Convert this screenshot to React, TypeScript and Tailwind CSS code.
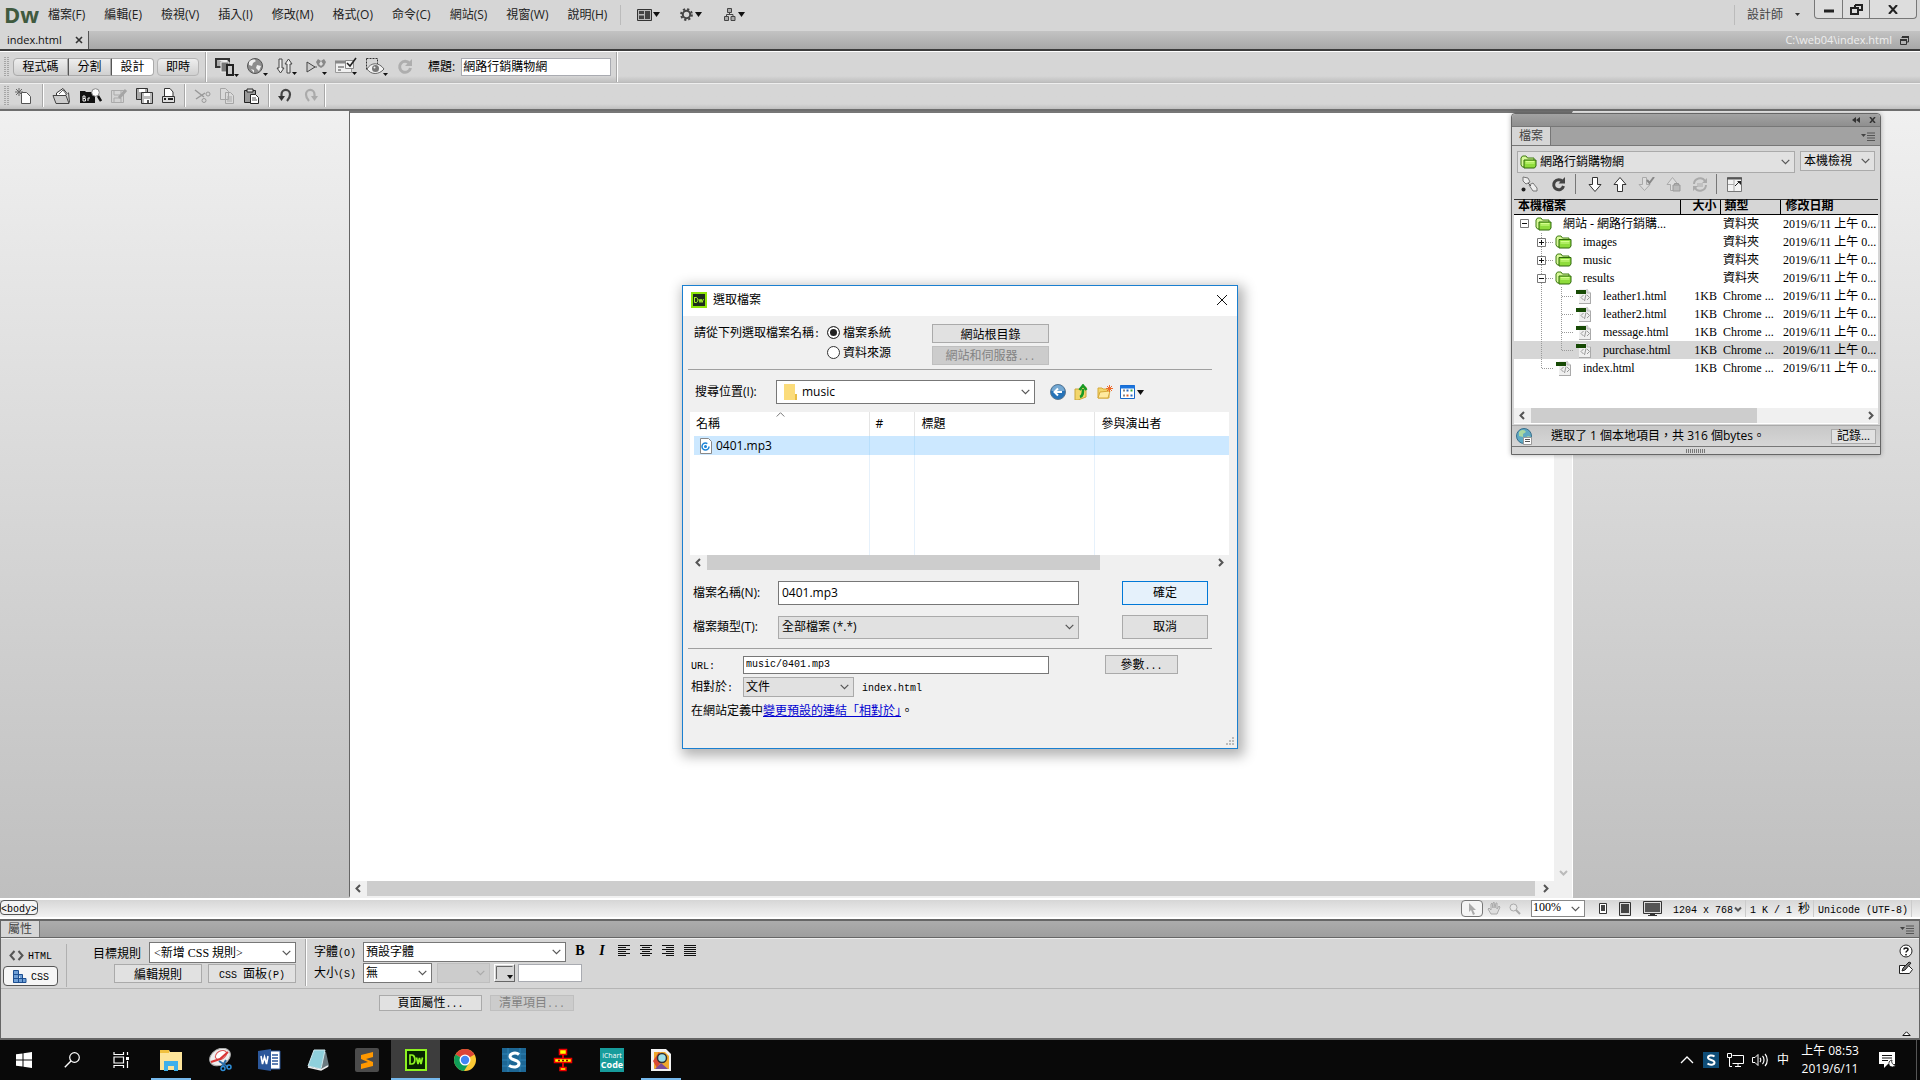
import type { ReactNode } from 'react'
import clsx from 'clsx'

const ui = "font-['Open_Sans','Noto_Sans_CJK_TC',sans-serif]"
const serif = "font-['Liberation_Serif','Noto_Sans_CJK_TC',serif]"

const menus = ['檔案(F)', '編輯(E)', '檢視(V)', '插入(I)', '修改(M)', '格式(O)', '命令(C)', '網站(S)', '視窗(W)', '說明(H)']

type TreeRow = {
  name: string
  depth: 0 | 1 | 2
  kind: 'open' | 'closed' | 'file'
  last?: boolean
  selected?: boolean
}

const tree: TreeRow[] = [
  { name: '網站 - 網路行銷購...', depth: 0, kind: 'open' },
  { name: 'images', depth: 1, kind: 'closed' },
  { name: 'music', depth: 1, kind: 'closed' },
  { name: 'results', depth: 1, kind: 'open' },
  { name: 'leather1.html', depth: 2, kind: 'file' },
  { name: 'leather2.html', depth: 2, kind: 'file' },
  { name: 'message.html', depth: 2, kind: 'file' },
  { name: 'purchase.html', depth: 2, kind: 'file', last: true, selected: true },
  { name: 'index.html', depth: 1, kind: 'file', last: true },
]

/* Half-width runs are set in a smaller mono face so that two of them fill one full-width cell. */
function Cells({ text, className }: { text: string; className?: string }) {
  return (
    <span className={clsx('whitespace-pre', className)}>
      {text.split(/([\x20-\x7e]+)/).map((run, i) =>
        i % 2 ? (
          <span key={i} className="font-['Liberation_Mono',monospace] text-[10px]">
            {run}
          </span>
        ) : (
          run
        ),
      )}
    </span>
  )
}

function Svg({ w = 16, h = 16, children, className }: { w?: number; h?: number; children: ReactNode; className?: string }) {
  return (
    <svg width={w} height={h} viewBox={`0 0 ${w} ${h}`} fill="none" className={clsx('shrink-0', className)} aria-hidden>
      {children}
    </svg>
  )
}

function Chevron({ className }: { className?: string }) {
  return (
    <Svg w={9} h={6} className={className}>
      <path d="M.7.8 4.500 4.600 8.300.8" stroke="currentColor" strokeWidth="1.200" />
    </Svg>
  )
}

function ScrollArrow({ dir, className }: { dir: 'left' | 'right' | 'down'; className?: string }) {
  const d = { left: 'M6 1 2.500 4.500 6 8', right: 'M3 1 6.500 4.500 3 8', down: 'M1 3 4.500 6.500 8 3' }[dir]
  return (
    <Svg w={9} h={9} className={className}>
      <path d={d} stroke="currentColor" strokeWidth="2" />
    </Svg>
  )
}

type SelectProps = {
  label: string
  options: string[]
  className?: string
  textClass?: string
  disabled?: boolean
  icon?: ReactNode
}

function Select({ label, options, className, textClass, disabled, icon }: SelectProps) {
  return (
    <div className={clsx('relative flex items-center border', className)}>
      {icon}
      <select
        aria-label={label}
        disabled={disabled}
        className={clsx('h-full min-w-0 flex-1 appearance-none bg-transparent pr-4 outline-none', textClass)}
      >
        {options.map((o) => (
          <option key={o}>{o}</option>
        ))}
      </select>
      <Chevron className={clsx('pointer-events-none absolute right-1', disabled ? 'text-[#aaa]' : 'text-[#555]')} />
    </div>
  )
}

function ToolButton({ label, children, className }: { label: string; children: ReactNode; className?: string }) {
  return (
    <button type="button" aria-label={label} className={clsx('flex shrink-0 items-center justify-center', className)}>
      {children}
    </button>
  )
}

function Grip() {
  return (
    <Svg w={5} h={22}>
      <path d="M1 1v20M4 1v20" stroke="#777" strokeWidth="1" strokeDasharray="1 1" />
    </Svg>
  )
}

function Divider({ className }: { className?: string }) {
  return <div className={clsx('w-[2px] self-stretch border-l border-r border-l-[#a8a8a8] border-r-white', className)} />
}

function Caret() {
  return (
    <Svg w={7} h={5}>
      <path d="M0 0h7L3.500 5z" fill="#111" />
    </Svg>
  )
}

function PanelMenu() {
  return (
    <Svg w={15} h={9}>
      <path d="M0 2h5L2.500 5z" fill="#444" />
      <path d="M6 1h8M6 3.500h8M6 6h8M6 8.500h8" stroke="#555" />
    </Svg>
  )
}

function Folder({ open = true }: { open?: boolean }) {
  return (
    <Svg w={17} h={14}>
      <path d="M1 3 2.500 1H6l1.500 2H14v9H2.500L1 10z" fill="#d8f99a" stroke="#3c7a0e" />
      <path d={open ? 'M4 5h12v6l-1.500 2H4z' : 'M4 4.500h12V11l-1.500 2H4z'} fill="#8fdc3c" stroke="#2f690a" />
      <path d="M5.500 6.500h9M5.500 8h9" stroke="#d3ff8b" />
    </Svg>
  )
}

function HtmlFile() {
  return (
    <Svg w={17} h={16}>
      <path d="M4 1h8l4 4v10H4z" fill="#efefef" />
      <path d="M12 1v4h4" fill="#ddd" stroke="#bbb" />
      <path d="M4 15.500h12M15.500 5v10" stroke="#aaa" />
      <path d="M8.500 7 6 9.500 8.500 12M12 7l2.500 2.500L12 12M11 6.500 9.500 13" stroke="#999" />
      <path d="M1 2h10v4H1z" fill="#174a05" />
    </Svg>
  )
}

function MenuBar() {
  return (
    <header className={clsx('flex h-[31px] items-center bg-[#d6d6d6] pb-[2px] pl-1 text-xs text-[#222]', ui)}>
      <span className="w-[44px] pb-[2px] text-[22px] leading-none font-bold text-[#3f5a3f]">Dw</span>
      <nav className="flex gap-[19px]" aria-label="主選單">
        {menus.map((m) => (
          <button key={m} type="button" className="whitespace-nowrap">
            {m}
          </button>
        ))}
      </nav>
      <div className="ml-[13px] h-5 border-l border-[#bbb]" />
      <div className="ml-4 flex items-center gap-5">
        <ToolButton label="版面" className="gap-px">
          <Svg w={15} h={12}>
            <path d="M.5.5h14v11H.5z" fill="#bbb" stroke="#333" />
            <path d="M2 2h5v3H2zM2 6.500h5V10H2zM8 2h5v8H8z" fill="#444" />
          </Svg>
          <Caret />
        </ToolButton>
        <ToolButton label="擴充" className="gap-[2px]">
          <Svg w={13} h={13}>
            <circle cx="6.500" cy="6.500" r="5.400" stroke="#444" strokeWidth="2" strokeDasharray="2.200 2.040" />
            <circle cx="6.500" cy="6.500" r="3.700" stroke="#444" strokeWidth="2" />
          </Svg>
          <Caret />
        </ToolButton>
        <ToolButton label="網站" className="ml-[2px] gap-[2px]">
          <Svg w={12} h={13}>
            <path d="M3.500.5h4v4h-4zM.5 8.500h4v4h-4zM7 8.500h4v4H7z" fill="#aaa" stroke="#444" />
            <path d="M5.500 5v1.500M2.500 8V6.500H9V8" stroke="#444" />
          </Svg>
          <Caret />
        </ToolButton>
      </div>
      <div className="ml-auto h-5 border-l border-[#bbb]" />
      <button type="button" className="ml-3 flex items-center gap-3 text-[#444]">
        設計師
        <Svg w={5} h={3}>
          <path d="M0 0h5L2.500 3z" fill="#333" />
        </Svg>
      </button>
      <div className="mr-[3px] ml-[14px] flex h-[19px] self-start rounded-b border border-t-0 border-[#777] bg-[#ddd]">
        <ToolButton label="最小化" className="w-7 border-r border-[#777]">
          <Svg w={10} h={10}>
            <path d="M0 7h10" stroke="#222" strokeWidth="3" />
          </Svg>
        </ToolButton>
        <ToolButton label="還原" className="w-[27px] border-r border-[#777]">
          <Svg w={13} h={11}>
            <path d="M5 1h7v5H8M5 1v2M1 4h7v6H1z" stroke="#222" strokeWidth="2" />
          </Svg>
        </ToolButton>
        <ToolButton label="關閉" className="w-[46px]">
          <Svg w={10} h={9}>
            <path d="m1 0 8 9M9 0 1 9" stroke="#222" strokeWidth="2" />
          </Svg>
        </ToolButton>
      </div>
    </header>
  )
}

function DocumentTabs() {
  return (
    <div className={clsx('flex h-[20px] border-b-2 border-[#3c3c3c] bg-linear-to-b from-[#c3c3c3] to-[#a8a8a8] text-[11px]', ui)}>
      <div className="flex items-center gap-[13px] border-r border-[#555] bg-[#d6d6d6] pr-[5px] pl-[7px] text-[#111]">
        <span>index.html</span>
        <ToolButton label="關閉 index.html">
          <Svg w={8} h={8}>
            <path d="m1 1 6 6M7 1 1 7" stroke="#333" strokeWidth="1.600" />
          </Svg>
        </ToolButton>
      </div>
      <div className="ml-auto flex items-center gap-2 pr-[11px] text-[#eee]">
        <span>C:\web04\index.html</span>
        <Svg w={9} h={9}>
          <path d="M2 2V1h6.500v5H7M.5 3.500h6v5h-6z" stroke="#333" />
          <path d="M2 1h7M0 4h7" stroke="#333" strokeWidth="2" />
        </Svg>
      </div>
    </div>
  )
}

const viewIcons = [
  {
    label: '多螢幕',
    art: (
      <>
        <path d="M1 2h13v8H1z" fill="#aaa" stroke="#333" strokeWidth="2" />
        <path d="M3 3h9v3z" fill="#eee" />
        <path d="M6 5h8v10H6z" fill="#777" stroke="#eee" />
        <path d="M12 8h6v10h-6z" fill="#ccc" stroke="#222" strokeWidth="2" />
        <path d="M19 17h5l-2.500 3z" fill="#111" />
      </>
    ),
  },
  {
    label: '預覽',
    art: (
      <>
        <circle cx="10" cy="9" r="7.500" fill="#8d8d8d" stroke="#555" />
        <path d="M4 5c3-3 6-3 7-1L8 6 7 9 4 8zM12 8l4 1-2 5-3-3zM6 12l3 1v3z" fill="#eee" />
        <path d="M18 16h5l-2.500 3z" fill="#111" />
      </>
    ),
  },
  {
    label: '檔案管理',
    art: (
      <>
        <path d="M4 2h3v9h2l-3.500 5L2 11h2zM12 16h3V7h2l-3.500-5L10 7h2z" fill="#eee" stroke="#444" />
        <path d="M17 15h5l-2.500 3z" fill="#111" />
      </>
    ),
  },
  {
    label: 'W3C 驗證',
    art: (
      <>
        <path d="m2 5 8 5-8 5z" fill="#ccc" stroke="#444" />
        <path d="M9 10h3" stroke="#555" />
        <path d="m11 5 2-3 3 2 3-2 2 3-2 4-3 2-3-2z" fill="#888" />
        <path d="m16 4 2 3-2 2-2-2z" fill="#ddd" />
        <path d="M17 15h5l-2.500 3z" fill="#111" />
      </>
    ),
  },
  {
    label: '瀏覽器相容性',
    art: (
      <>
        <path d="M.5 4.500h16v11H.5z" fill="#f0f0f0" stroke="#999" />
        <path d="M0 5h17" stroke="#888" strokeWidth="3" />
        <path d="M3 10h6M3 13h3" stroke="#999" strokeWidth="2" />
        <path d="M10.500 3.500h8v8h-8z" fill="#f4f4f4" stroke="#888" />
        <path d="m12 6 3 3 6-8" stroke="#222" strokeWidth="1.600" />
        <path d="M17 15h5l-2.500 3z" fill="#111" />
      </>
    ),
  },
  {
    label: '視覺輔助',
    art: (
      <>
        <path d="M1.500 1.500h11v11h-11z" stroke="#333" strokeDasharray="2 1" />
        <path d="M2 12c4-7 12-7 17 0-5 6-13 6-17 0z" fill="#f1f1f1" stroke="#666" />
        <circle cx="10.500" cy="11.500" r="3.500" fill="#777" />
        <circle cx="9.500" cy="10.500" r="1" fill="#eee" />
        <path d="M18 16h5l-2.500 3z" fill="#111" />
      </>
    ),
  },
]

function ViewToolbar() {
  const views = ['程式碼', '分割', '設計']
  return (
    <div className="flex h-[32px] items-center border-t border-b border-t-white border-b-[#bbb] bg-linear-to-b from-[#d6d6d6] from-80% to-[#c0c0c0] pl-1 text-xs">
      <Grip />
      <div className={clsx('ml-1 flex h-[18px] text-black', ui)}>
        {views.map((v, i) => (
          <button
            key={v}
            type="button"
            className={clsx(
              'border border-[#aaa] leading-none',
              i === 0 && 'w-[55px] rounded-l',
              i > 0 && 'w-[43px] border-l-[#555]',
              i === 2 ? 'rounded-r border-[#555] bg-white' : 'bg-linear-to-b from-[#eee] to-[#d0d0d0]',
            )}
          >
            {v}
          </button>
        ))}
        <button type="button" className="ml-[3px] w-[42px] rounded border border-[#b5b5b5] bg-linear-to-b from-[#eee] to-[#d0d0d0] leading-none">
          即時
        </button>
      </div>
      <Divider className="mr-2 ml-[6px]" />
      <div className="flex items-center gap-[6px]">
        {viewIcons.map((icon) => (
          <ToolButton key={icon.label} label={icon.label}>
            <Svg w={24} h={20}>
              {icon.art}
            </Svg>
          </ToolButton>
        ))}
        <ToolButton label="重新整理" className="ml-[2px]">
          <Svg w={16} h={16}>
            <path d="M12.500 4.500A5.500 5.500 0 1 0 13.500 9" stroke="#aeaeae" strokeWidth="3" />
            <path d="M8 7h7V0z" fill="#aeaeae" />
          </Svg>
        </ToolButton>
      </div>
      <label htmlFor="page-title" className={clsx('ml-[15px] whitespace-nowrap', ui)}>
        標題:
      </label>
      <input
        id="page-title"
        defaultValue="網路行銷購物網"
        className={clsx('ml-[6px] h-[18px] w-[150px] border border-[#a9abb1] bg-white pb-[3px] pl-px outline-none', ui)}
      />
      <Divider className="ml-[5px]" />
    </div>
  )
}

function StandardToolbar() {
  return (
    <div className="flex h-[28px] items-center border-t border-b-2 border-t-[#eee] border-b-[#6e6e6e] bg-linear-to-b from-[#d6d6d6] from-80% to-[#c0c0c0] pb-[2px] pl-1">
      <Grip />
      <ToolButton label="新增" className="ml-[6px]">
        <Svg>
          <path d="M6.500 4.500h5l4 4v7h-9z" fill="#fff" stroke="#555" />
          <path d="M4 0v8M0 4h8M1 1l6 6M7 1 1 7" stroke="#666" />
        </Svg>
      </ToolButton>
      <Divider className="mr-[8px] ml-[11px]" />
      <div className="flex items-center gap-2">
        <ToolButton label="開啟">
          <Svg w={20} h={16}>
            <path d="M4.500 7V5L11 .5l4 5L13 8" fill="#fff" stroke="#333" />
            <path d="m7 6 4-4 3 4" stroke="#666" />
            <path d="M1 7.500h13l3 8H4zM16.500 4.500l1 10" fill="#ccc" stroke="#444" />
          </Svg>
        </ToolButton>
        <ToolButton label="在 Bridge 中瀏覽">
          <Svg w={22} h={16}>
            <path d="M0 3h5l1 1h9v11H0z" fill="#111" />
            <path d="M3 8v5h2.500M3 8h2v2.500H3M5.500 10.500V13M8 13v-3h2" stroke="#eee" />
            <circle cx="15.500" cy="4.500" r="3.800" fill="#fff" stroke="#888" />
            <path d="m18 8 3 5" stroke="#111" strokeWidth="2.500" />
          </Svg>
        </ToolButton>
        <ToolButton label="儲存">
          <Svg w={18} h={16}>
            <path d="M1.500 2.500h12v12h-12zM4 3v4h7V3M4 14v-4h7v4" stroke="#aaa" fill="#d4d4d4" />
            <path d="m9 10 7-8" stroke="#a5a5a5" strokeWidth="3" />
          </Svg>
        </ToolButton>
        <ToolButton label="全部儲存">
          <Svg w={17} h={16}>
            <path d="M.5.5h11v11H.5z" fill="#aaa" stroke="#333" />
            <path d="M3 1h6v3H3z" fill="#fff" />
            <path d="M5.500 4.500h11v11h-11z" fill="#bbb" stroke="#333" />
            <path d="M8 5h6v3H8zM8 11h6v4H8z" fill="#fff" />
            <path d="M11 12h2v3h-2z" fill="#555" />
          </Svg>
        </ToolButton>
        <ToolButton label="列印">
          <Svg w={15} h={16}>
            <path d="M3.500 8V.5H9L12 4v4" fill="#fff" stroke="#333" />
            <path d="M1.500 8.500h12v6h-12z" fill="#ddd" stroke="#333" />
            <path d="M3 11h2M7 11h5" stroke="#222" strokeWidth="2" />
          </Svg>
        </ToolButton>
      </div>
      <Divider className="mr-2 ml-[8px]" />
      <div className="flex items-center gap-2">
        <ToolButton label="剪下">
          <Svg w={17} h={16}>
            <path d="m1 2 9 7M2 11l9-6" stroke="#999" strokeWidth="1.500" />
            <circle cx="14" cy="6" r="2" stroke="#999" />
            <circle cx="10" cy="12.500" r="2" stroke="#999" />
          </Svg>
        </ToolButton>
        <ToolButton label="複製">
          <Svg w={16} h={16}>
            <path d="M1.500.5h5l3 3v8h-8zM6.500 4.500h5l3 3v8h-8z" fill="#dadada" stroke="#a5a5a5" />
            <path d="M8 9h5M8 11h5M8 13h5" stroke="#aaa" />
          </Svg>
        </ToolButton>
        <ToolButton label="貼上">
          <Svg w={17} h={16}>
            <path d="M1.500 2.500h11v12h-11z" fill="#999" stroke="#222" />
            <path d="M4 1h6v3H4z" fill="#ddd" stroke="#222" />
            <path d="M7.500 6.500h5l3 3v6h-8z" fill="#fff" stroke="#222" />
            <path d="M9 10h4M9 12h5" stroke="#555" />
          </Svg>
        </ToolButton>
      </div>
      <Divider className="mr-[8px] ml-[8px]" />
      <div className="flex items-center gap-3">
        <ToolButton label="復原">
          <Svg w={14} h={15}>
            <path d="M3.500 9V6.500a4.200 4.500 0 0 1 8.500 0c0 3-1 4.500-3 6.500" stroke="#444" strokeWidth="2.200" />
            <path d="M0 8h7l-3.500 5z" fill="#333" />
          </Svg>
        </ToolButton>
        <ToolButton label="重做">
          <Svg w={14} h={15}>
            <path d="M10.500 9V6.500a4.200 4.500 0 0 0-8.500 0c0 3 1 4.500 3 6.500" stroke="#aaa" strokeWidth="2.200" />
            <path d="M14 8H7l3.500 5z" fill="#aaa" />
          </Svg>
        </ToolButton>
      </div>
      <Divider className="ml-[6px]" />
    </div>
  )
}

function Canvas() {
  return (
    <main className="flex min-h-[500px] flex-1 bg-linear-to-b from-[#f0f0f0] to-[#bfbfbf] pl-[2px]">
      <div className="flex-1" />
      <section
        className="flex w-[1224px] max-w-full flex-col border-t-2 border-r border-b-2 border-l border-t-[#777] border-r-white border-b-[#f0f0f0] border-l-[#666] bg-white"
        aria-label="設計檢視"
      >
        <div className="flex flex-1">
          <div className="flex-1" />
          <div className="flex w-[18px] flex-col items-center justify-end bg-[#f0f0f0] pb-1 text-[#bbb]">
            <ScrollArrow dir="down" />
          </div>
        </div>
        <div className="flex h-[15px] items-center bg-[#f0f0f0] text-[#555]">
          <ScrollArrow dir="left" className="mx-1" />
          <div className="h-full flex-1 bg-[#cdcdcd]" />
          <ScrollArrow dir="right" className="mr-[22px] ml-[6px]" />
        </div>
      </section>
      <div className="flex-1" />
    </main>
  )
}

function StatusBar() {
  return (
    <footer className="flex h-[21px] items-center border-t-2 border-b-2 border-white bg-linear-to-b from-[#d6d6d6] to-[#f2f2f2] text-xs text-black">
      <button type="button" className="flex h-[15px] w-[38px] items-center justify-center self-start rounded border border-[#555] bg-[#f4f4f4] leading-none">
        <Cells text="<body>" />
      </button>
      <div className="ml-auto flex h-full items-center">
        <ToolButton label="選取工具" className="h-full w-[22px] rounded border border-[#777] bg-[#f4f4f4]">
          <Svg w={8} h={12}>
            <path d="M1 0v9l2-2 2 5 2-1-2-4h3z" fill="#aaa" />
          </Svg>
        </ToolButton>
        <ToolButton label="手形工具" className="ml-1">
          <Svg w={14} h={13}>
            <path d="M4 12 1 7l1-1 2 2V2l1-1 1 5V1l1-1 1 6 1-5h1v6l2-3 1 1-3 7z" fill="#ddd" stroke="#aaa" />
          </Svg>
        </ToolButton>
        <ToolButton label="縮放工具" className="ml-2">
          <Svg w={12} h={12}>
            <circle cx="4.500" cy="4.500" r="3.500" fill="#e8e8e8" stroke="#aaa" />
            <path d="m7 7 4 4" stroke="#aaa" strokeWidth="2" />
          </Svg>
        </ToolButton>
        <Select
          label="縮放"
          options={['100%']}
          className="ml-[10px] h-full w-[54px] border-[#888] bg-white"
          textClass="pb-[2px] pl-px text-xs leading-[13px] font-['Liberation_Serif',serif]"
        />
        <ToolButton label="手機" className="ml-[14px]">
          <Svg w={8} h={11}>
            <path d="M.5.5h7v10h-7z" fill="#fff" stroke="#333" />
            <path d="M2 2h4v6H2z" fill="#444" />
          </Svg>
        </ToolButton>
        <ToolButton label="平板" className="ml-3">
          <Svg w={12} h={14}>
            <path d="M.5.5h11v13H.5z" fill="#ddd" stroke="#333" />
            <path d="M2 2h8v9H2z" fill="#444" />
          </Svg>
        </ToolButton>
        <ToolButton label="桌面" className="ml-3">
          <Svg w={20} h={16}>
            <path d="M.5.5h18v12H.5z" fill="#ddd" stroke="#333" />
            <path d="M2 2h15v9H2z" fill="#555" />
            <path d="M7 13h5v1h2v1H5v-1h2z" fill="#333" />
          </Svg>
        </ToolButton>
        <Cells text="1204 x 768" className="ml-[10px]" />
        <Svg w={8} h={6} className="mr-[3px] ml-px">
          <path d="M1 1.500 4 4.500l3-3" stroke="#555" strokeWidth="2" />
        </Svg>
        <Cells text="1 K / 1 秒" className="border-l border-[#ccc] pr-[3px] pl-1" />
        <Cells text="Unicode (UTF-8)" className="mr-2 border-r border-l border-[#ccc] pr-[3px] pl-1" />
      </div>
    </footer>
  )
}

const alignLines = [
  { label: '靠左對齊', d: 'M0 .5h12M0 2.500h8M0 4.500h12M0 6.500h8M0 8.500h12M0 10.500h8' },
  { label: '置中對齊', d: 'M0 .5h12M2 2.500h8M0 4.500h12M2 6.500h8M0 8.500h12M2 10.500h8' },
  { label: '靠右對齊', d: 'M0 .5h12M4 2.500h8M0 4.500h12M4 6.500h8M0 8.500h12M4 10.500h8' },
  { label: '左右對齊', d: 'M0 .5h12M0 2.500h12M0 4.500h12M0 6.500h12M0 8.500h12M0 10.500h12' },
]

const flatButton = 'border border-[#aaa] bg-[#e1e1e1] leading-none text-black'
const deadButton = 'border border-[#bfbfbf] bg-[#ccc] leading-none text-[#838383]'

function PropertiesPanel() {
  return (
    <section className="border-r border-b-2 border-l border-[#666] bg-[#d6d6d6] text-xs text-black" aria-label="屬性">
      <div className="flex h-[19px] items-stretch border-t-2 border-b border-[#666] bg-linear-to-b from-[#acacac] to-[#9e9e9e]">
        <span className={clsx('flex items-center border-r border-[#777] bg-[#d6d6d6] px-[7px] text-[#444]', ui)}>屬性</span>
        <button type="button" aria-label="面板選單" className="mr-1 ml-auto">
          <PanelMenu />
        </button>
      </div>
      <div className="flex h-[51px] border-t border-b border-t-[#eee] border-b-[#b5b5b5]">
        <div className="mt-[5px] mb-px flex w-[66px] flex-col border-r border-[#b0b0b0] pl-[2px]">
          <button type="button" className="flex h-[22px] items-center gap-1 pl-[6px]">
            <Svg w={15} h={11}>
              <path d="M5.500 1 1.500 5.500l4 4.500M9.500 1l4 4.500-4 4.500" stroke="#555" strokeWidth="2" />
            </Svg>
            <Cells text="HTML" />
          </button>
          <button type="button" className="flex h-[20px] w-[55px] items-center gap-1 rounded border border-[#555] bg-[#f6f6f6] pl-[9px]">
            <Svg w={14} h={13}>
              <path d="M.5.5h5v12h-5zM.5 4.500h5M.5 8.500H13v4H.5M5.500 4.500h4v8" fill="#6f9fd6" stroke="#1d4f91" />
            </Svg>
            <Cells text="CSS" />
          </button>
        </div>
        <div className="mt-[3px] flex w-[238px] flex-col items-end gap-px pr-[9px]">
          <div className="flex items-center gap-2">
            <span>目標規則</span>
            <Select
              label="目標規則"
              options={['<新增 CSS 規則>']}
              className="h-[21px] w-[147px] border-[#777] bg-white"
              textClass={clsx('pl-1', serif)}
            />
          </div>
          <div className="flex h-[19px] gap-[6px]">
            <button type="button" className={clsx(flatButton, 'w-[88px]')}>
              編輯規則
            </button>
            <button type="button" className={clsx(flatButton, 'w-[88px]')}>
              <Cells text="CSS 面板(P)" />
            </button>
          </div>
        </div>
        <Divider className="mb-[2px]" />
        <div className="mt-[3px] ml-[7px] flex flex-col gap-px">
          <div className="flex items-center">
            <Cells text="字體(O)" className="w-[49px]" />
            <Select label="字體" options={['預設字體']} className="h-[20px] w-[203px] border-[#777] bg-white" textClass={clsx('pl-[2px]', ui)} />
            <div className="ml-2 flex items-center gap-[10px] pb-[2px]">
              <button type="button" aria-label="粗體" className="w-3 text-sm leading-none font-bold font-['Liberation_Serif',serif]">
                B
              </button>
              <button type="button" aria-label="斜體" className="w-3 text-sm leading-none font-bold italic font-['Liberation_Serif',serif]">
                I
              </button>
              {alignLines.map((a) => (
                <ToolButton key={a.label} label={a.label}>
                  <Svg w={12} h={12}>
                    <path d={a.d} stroke="#111" shapeRendering="crispEdges" />
                  </Svg>
                </ToolButton>
              ))}
            </div>
          </div>
          <div className="flex items-center">
            <Cells text="大小(S)" className="w-[49px]" />
            <Select label="大小" options={['無']} className="h-[20px] w-[69px] border-[#777] bg-white" textClass={clsx('pl-[2px]', ui)} />
            <Select label="單位" options={[' ']} disabled className="ml-[5px] h-[20px] w-[53px] border-[#bfbfbf] bg-[#ccc]" />
            <ToolButton label="文字顏色" className="ml-1 h-[18px] w-[21px] border border-[#666] border-t-white border-l-white">
              <Svg w={17} h={14}>
                <path d="M.5 13V.5h16" stroke="#666" />
                <path d="M11 9h6l-3 4z" fill="#111" />
              </Svg>
            </ToolButton>
            <input aria-label="色碼" className="ml-[3px] h-[18px] w-[64px] border border-[#a9abb1] bg-white outline-none" />
          </div>
        </div>
        <div className="mt-[5px] mr-[5px] ml-auto flex flex-col items-center gap-[3px]">
          <ToolButton label="說明">
            <Svg w={14} h={14}>
              <circle cx="7" cy="7" r="6" fill="#fff" stroke="#222" />
              <path d="M5 5.500C5 3.500 9 3.500 9 5.500 9 7 7 7 7 8.500M7 10v1.500" stroke="#111" strokeWidth="1.500" />
            </Svg>
          </ToolButton>
          <ToolButton label="快速標籤編輯器">
            <Svg w={16} h={14}>
              <path d="M1.500 4.500h9l4 4-3 4h-10z" fill="#fff" stroke="#222" />
              <path d="m4 10 1-3 6-6 2 1-6 7z" fill="#777" stroke="#222" />
            </Svg>
          </ToolButton>
        </div>
      </div>
      <div className="flex h-[49px] items-start pt-[6px] pl-[378px]">
        <button type="button" className={clsx(flatButton, 'h-[16px] w-[103px]')}>
          <Cells text="頁面屬性..." />
        </button>
        <button type="button" disabled className={clsx(deadButton, 'ml-2 h-[16px] w-[84px]')}>
          <Cells text="清單項目..." />
        </button>
        <button type="button" aria-label="收合" className="mr-2 mb-[2px] ml-auto self-end">
          <Svg w={9} h={5}>
            <path d="M.8 4.500 4.500.8l3.700 3.700z" fill="#fff" stroke="#111" />
          </Svg>
        </button>
      </div>
    </section>
  )
}

function TreeGuides({ row }: { row: TreeRow }) {
  if (row.depth === 0) {
    return (
      <Svg w={21} h={18}>
        <path d="M6.500 4.500h8v8h-8z" fill="#fff" stroke="#777" />
        <path d="M8 8.500h5" stroke="#111" />
      </Svg>
    )
  }
  const w = row.depth === 1 ? 41 : 61
  const rootEnd = row.depth === 1 && row.last ? 9 : 18
  return (
    <Svg w={w} h={18}>
      <path d={`M27.500 0v${rootEnd}`} stroke="#999" strokeDasharray="1 1" />
      {row.depth === 1 && <path d="M28 9.500h12" stroke="#999" strokeDasharray="1 1" />}
      {row.depth === 2 && (
        <>
          <path d={`M47.500 0v${row.last ? 10 : 18}`} stroke="#999" strokeDasharray="1 1" />
          <path d="M48 9.500h12" stroke="#999" strokeDasharray="1 1" />
        </>
      )}
      {row.depth === 1 && row.kind !== 'file' && (
        <>
          <path d="M23.500 5.500h8v8h-8z" fill="#fff" stroke="#777" />
          <path d={row.kind === 'closed' ? 'M25 9.500h5M27.500 7v5' : 'M25 9.500h5'} stroke="#111" />
        </>
      )}
    </Svg>
  )
}

function FilesPanel() {
  return (
    <aside
      className="absolute top-[113px] right-[39px] w-[370px] rounded-t border border-[#666] bg-[#d6d6d6] text-xs text-black shadow-[0_0_5px_rgba(0,0,0,0.3)]"
      aria-label="檔案"
    >
      <div className="flex h-[12px] items-center justify-end gap-[9px] rounded-t bg-linear-to-b from-[#a3a3a3] to-[#8f8f8f] pr-1">
        <ToolButton label="收合面板">
          <Svg w={8} h={6}>
            <path d="M4 0v6L0 3zM8 0v6L4 3z" fill="#333" />
          </Svg>
        </ToolButton>
        <ToolButton label="關閉面板">
          <Svg w={7} h={6}>
            <path d="m1 0 5 6M6 0 1 6" stroke="#333" strokeWidth="1.500" />
          </Svg>
        </ToolButton>
      </div>
      <div className="flex h-[20px] border-t border-b border-[#777] bg-[#a2a2a2]">
        <span className={clsx('flex items-center border-r border-[#777] bg-[#d6d6d6] px-[7px] text-[#444]', ui)}>檔案</span>
        <button type="button" aria-label="面板選單" className="mr-1 ml-auto">
          <PanelMenu />
        </button>
      </div>
      <div className={clsx('flex gap-[5px] px-[5px] pt-[5px]', ui)}>
        <Select
          label="網站"
          options={['網路行銷購物網']}
          className="h-[22px] flex-1 border-[#aaa] bg-[#e1e1e1] pl-[2px]"
          textClass="pl-[3px]"
          icon={<Folder />}
        />
        <Select label="檢視" options={['本機檢視']} className="h-[20px] w-[75px] border-[#aaa] bg-[#e1e1e1]" textClass="pl-[3px]" />
      </div>
      <div className="flex h-[26px] items-center pb-1 pl-[9px]">
        <ToolButton label="連線">
          <Svg w={17} h={16}>
            <path d="m2 1 5 1 2 4-4 2-3-3zM8 9l4-2 4 5v3h-4z" fill="#eee" stroke="#777" />
            <path d="m7 7 3 3" stroke="#555" />
            <circle cx="2.500" cy="13.500" r="2" fill="#222" />
          </Svg>
        </ToolButton>
        <ToolButton label="重新整理" className="ml-[13px]">
          <Svg w={15} h={15}>
            <path d="M11.500 4.500A5 5 0 1 0 12.500 9" stroke="#444" strokeWidth="3" />
            <path d="M7.500 6.500H14V0z" fill="#444" />
          </Svg>
        </ToolButton>
        <div className="ml-[9px] h-5 border-l border-[#777]" />
        <div className="ml-3 flex items-center gap-[11px]">
          <ToolButton label="取得檔案">
            <Svg w={14} h={15}>
              <path d="M4.500.5h5v7H13l-6 7-6-7h3.500z" fill="#fff" stroke="#333" />
            </Svg>
          </ToolButton>
          <ToolButton label="上傳檔案">
            <Svg w={14} h={15}>
              <path d="M4.500 14.500h5v-7H13L7 .5l-6 7h3.500z" fill="#fff" stroke="#333" />
            </Svg>
          </ToolButton>
          <ToolButton label="取出檔案">
            <Svg w={17} h={15}>
              <path d="M4.500.5h4v7H12l-5.500 6-5.500-6h3.500z" fill="#ddd" stroke="#aaa" />
              <path d="m9 3 2.500 3L16 0" stroke="#888" strokeWidth="2" />
            </Svg>
          </ToolButton>
          <ToolButton label="存回檔案">
            <Svg w={15} h={15}>
              <path d="M4.500 13.500h4v-6H12L6.500.5 1 7.500h3.500z" fill="#ddd" stroke="#aaa" />
              <path d="M7 8h7v6H7zM8.500 8V6.500h4V8" fill="#bbb" stroke="#999" />
            </Svg>
          </ToolButton>
          <ToolButton label="同步">
            <Svg w={16} h={15}>
              <path d="M2 7a6 6 0 0 1 11-3M14 8A6 6 0 0 1 3 11" stroke="#aaa" strokeWidth="2" />
              <path d="M10 6h5V1zM6 9H1v5z" fill="#aaa" />
              <path d="M5 7h6M5 9h6" stroke="#aaa" />
            </Svg>
          </ToolButton>
        </div>
        <div className="ml-[8px] h-5 border-l border-[#777]" />
        <ToolButton label="展開" className="ml-[10px]">
          <Svg w={15} h={15}>
            <path d="M.5.5h14v14H.5z" fill="#f4f4f4" stroke="#777" />
            <path d="M0 1.500h15" stroke="#555" strokeWidth="2" />
            <path d="M1 7.500h6M7 3v11" stroke="#aaa" />
            <path d="m8 9 4-4" stroke="#222" />
            <path d="M10 4h4v4z" fill="#222" />
          </Svg>
        </ToolButton>
      </div>
      <div className="mx-[2px] h-[225px] border-t border-[#333] bg-white">
        <table className={clsx('w-full table-fixed border-collapse', serif)}>
          <colgroup>
            <col className="w-[166px]" />
            <col className="w-[40px]" />
            <col className="w-[60px]" />
            <col />
          </colgroup>
          <thead>
            <tr className="h-[14px] border-b border-black bg-[#d6d6d6] text-left leading-[13px]">
              <th className="border-r border-black p-0 pl-1">本機檔案</th>
              <th className="border-r border-black p-0 pr-[3px] text-right">大小</th>
              <th className="border-r border-black p-0 pl-1">類型</th>
              <th className="p-0 pl-[5px]">修改日期</th>
            </tr>
          </thead>
          <tbody>
            {tree.map((row) => (
              <tr key={row.name} className={clsx('h-[18px] leading-[18px] whitespace-nowrap', row.selected && 'bg-[#d6d6d6]')}>
                <td className="p-0">
                  <div className="flex h-[18px] items-center">
                    <TreeGuides row={row} />
                    {row.kind === 'file' ? <HtmlFile /> : <Folder open={row.kind === 'open'} />}
                    <span className="ml-[11px]">{row.name}</span>
                  </div>
                </td>
                <td className="p-0 pr-[3px] text-right">{row.kind === 'file' && '1KB'}</td>
                <td className="p-0 pl-[3px]">{row.kind === 'file' ? 'Chrome ...' : '資料夾'}</td>
                <td className="overflow-hidden p-0 pl-[3px]">2019/6/11 上午 0...</td>
              </tr>
            ))}
          </tbody>
        </table>
        <div className="mt-[31px] flex h-[15px] items-center bg-[#f0f0f0] text-[#555]">
          <ScrollArrow dir="left" className="mx-1" />
          <div className="h-full w-[226px] bg-[#cdcdcd]" />
          <ScrollArrow dir="right" className="mr-[3px] ml-auto" />
        </div>
      </div>
      <div className={clsx('mt-px flex h-[21px] items-center border-t border-[#aaa] bg-linear-to-b from-[#c8c8c8] to-[#d6d6d6] pr-1 pl-1', ui)}>
        <Svg w={17} h={17}>
          <circle cx="8" cy="8" r="7.500" fill="#5fa9c4" stroke="#376f8c" />
          <path d="M3 4c3-3 6-2 7 0L7 6v3L3 8zM9 10l3-2 3 1-2 5z" fill="#a9d8a0" />
          <path d="M7.500 9.500h8v7h-8z" fill="#fff" stroke="#999" />
          <path d="M9 11.500h5M9 13.500h5" stroke="#555" />
        </Svg>
        <span className="ml-[18px]">選取了 1 個本地項目，共 316 個bytes。</span>
        <button type="button" className={clsx(flatButton, 'ml-auto h-[15px] w-[45px] whitespace-nowrap', serif)}>
          記錄...
        </button>
      </div>
      <div className="flex h-[8px] items-center justify-center border-t border-[#777]">
        <Svg w={20} h={4}>
          <path d="M0 2h20" stroke="#777" strokeWidth="4" strokeDasharray="1 1" />
        </Svg>
      </div>
    </aside>
  )
}

function FileDialog() {
  return (
    <div
      role="dialog"
      aria-labelledby="dialog-title"
      className="absolute top-[285px] left-1/2 w-[556px] -translate-x-1/2 border border-[#1a7fd0] bg-[#f0f0f0] text-xs text-black shadow-[3px_4px_12px_3px_rgba(0,0,0,0.3)]"
    >
      <div className={clsx('flex h-[30px] items-center bg-white pr-[9px] pb-[2px] pl-2', ui)}>
        <Svg>
          <path d="M1 1h14v14H1z" fill="#1c2e1c" stroke="#8ee60a" strokeWidth="2" />
          <path d="M3.500 5v5.500h1.500c2.500 0 2.500-5 0-5H3.500M8 7l1 3.500 1-3.500 1 3.500L12.500 7" stroke="#a6f32a" />
        </Svg>
        <h2 id="dialog-title" className="ml-[6px]">
          選取檔案
        </h2>
        <ToolButton label="關閉" className="ml-auto">
          <Svg w={12} h={12}>
            <path d="m1 1 10 10M11 1 1 11" stroke="#111" />
          </Svg>
        </ToolButton>
      </div>

      <div className="flex px-[11px] pt-[7px]">
        <p className="w-[133px] pt-px whitespace-nowrap">
          <Cells text="請從下列選取檔案名稱:" />
        </p>
        <div className="flex w-[105px] flex-col gap-[2px]">
          {['檔案系統', '資料來源'].map((name, i) => (
            <label key={name} className="flex items-center gap-[3px] leading-[18px]">
              <input
                type="radio"
                name="source"
                defaultChecked={i === 0}
                className="size-[13px] appearance-none rounded-full border border-[#333] bg-white checked:bg-[#222] checked:shadow-[inset_0_0_0_2px_#fff]"
              />
              {name}
            </label>
          ))}
        </div>
        <div className="flex flex-col gap-[3px] pt-px">
          <button type="button" className={clsx(flatButton, 'h-[19px] w-[117px]')}>
            網站根目錄
          </button>
          <button type="button" disabled className={clsx(deadButton, 'h-[19px] w-[117px]')}>
            <Cells text="網站和伺服器..." />
          </button>
        </div>
      </div>
      <hr className="mt-1 mr-[25px] ml-[5px] border-t border-[#a0a0a0]" />

      <div className={clsx('mt-[10px] flex h-[24px] items-center pl-3', ui)}>
        <span className="w-[81px]">搜尋位置(I):</span>
        <Select
          label="搜尋位置"
          options={['music']}
          className="h-full w-[259px] border-[#777] bg-white pl-[7px]"
          textClass="pl-[5px]"
          icon={
            <Svg w={13} h={16}>
              <path d="M0 0h11v10h2v6H0z" fill="#fbdc7b" />
              <path d="M11 10h2v6h-2z" fill="#e9bd45" />
            </Svg>
          }
        />
        <ToolButton label="上一個位置" className="ml-[15px]">
          <Svg>
            <circle cx="8" cy="8" r="7.500" fill="#2673b8" stroke="#5d7890" />
            <path d="M1.500 7a6.500 6 0 0 1 13 0z" fill="#76a9d2" />
            <path d="M12 8H4.500M8 4.500 4.500 8 8 11.500" stroke="#fff" strokeWidth="2" />
          </Svg>
        </ToolButton>
        <ToolButton label="上一層" className="ml-2">
          <Svg w={14} h={16}>
            <path d="M1 5h5l1-2h5v10l-8 3H1z" fill="#f3d66b" stroke="#caa63a" />
            <path d="M6 13c3-1 3-4 3-8M5.500 6 9 1.500 12.500 6" stroke="#189a26" strokeWidth="2.500" />
          </Svg>
        </ToolButton>
        <ToolButton label="建立新資料夾" className="ml-[9px]">
          <Svg w={16} h={14}>
            <path d="M1 3h4l1 1h6v9H1z" fill="#f3d66b" stroke="#d6a938" />
            <path d="m3 7 10-1-2 7H1z" fill="#ffeaa0" stroke="#d6a938" />
            <path d="M12.500 0v7M9 3.500h7M10 1l5 5M15 1l-5 5" stroke="#ee6a2b" />
          </Svg>
        </ToolButton>
        <ToolButton label="檢視選單" className="ml-[7px] gap-[2px]">
          <Svg w={15} h={14}>
            <path d="M.5.5h14v13H.5z" fill="#fff" stroke="#1565c8" />
            <path d="M0 2h15" stroke="#1b74dd" strokeWidth="3" />
            <path d="M3 5.500h2M3 10.500h2" stroke="#888" strokeWidth="2" />
            <path d="M6.500 5.500h2M10.500 10.500h2" stroke="#2768c4" strokeWidth="2" />
            <path d="M10.500 5.500h2" stroke="#3aa03a" strokeWidth="2" />
            <path d="M6.500 10.500h2" stroke="#d65a2b" strokeWidth="2" />
          </Svg>
          <Caret />
        </ToolButton>
      </div>

      <div className="mt-2 mr-[8px] ml-[7px]">
        <div className="relative flex h-[143px] bg-white">
          <Svg w={9} h={5} className="absolute top-0 left-[86px]">
            <path d="M.7 4.500 4.500.7l3.800 3.800" stroke="#777" />
          </Svg>
          <table className={clsx('h-full w-full table-fixed border-collapse', ui)}>
            <colgroup>
              <col className="w-[4px]" />
              <col className="w-[175px]" />
              <col className="w-[45px]" />
              <col className="w-[180px]" />
              <col />
            </colgroup>
            <thead>
              <tr className="h-[24px] text-left">
                <td className="p-0" />
                <th className="border-r border-[#e5e5e5] p-0 pl-[2px] font-normal">名稱</th>
                <th className="border-r border-[#e5e5e5] p-0 pl-[6px] font-normal">#</th>
                <th className="border-r border-[#e5e5e5] p-0 pl-[7px] font-normal">標題</th>
                <th className="p-0 pl-[7px] font-normal">參與演出者</th>
              </tr>
            </thead>
            <tbody>
              <tr className="h-[19px]">
                <td className="p-0" />
                <td className="border-r border-[#b8dffc] bg-[#cce8ff] p-0">
                  <span className="flex h-[19px] items-center gap-1 pl-[6px]">
                    <Svg w={12} h={16}>
                      <path d="M.5.5h8l3 3v12H.5z" fill="#fff" stroke="#888" />
                      <circle cx="5.500" cy="8.500" r="3.500" stroke="#1b83d6" strokeWidth="1.500" strokeDasharray="18 4" />
                      <circle cx="5.500" cy="8.500" r="1.500" fill="#1b83d6" />
                    </Svg>
                    0401.mp3
                  </span>
                </td>
                <td className="border-r border-[#b8dffc] bg-[#cce8ff]" />
                <td className="border-r border-[#b8dffc] bg-[#cce8ff]" />
                <td className="bg-[#cce8ff]" />
              </tr>
              <tr>
                <td />
                <td className="border-r border-[#e6f1fb]" />
                <td className="border-r border-[#e6f1fb]" />
                <td className="border-r border-[#e6f1fb]" />
                <td />
              </tr>
            </tbody>
          </table>
        </div>
        <div className="flex h-[15px] items-center text-[#555]">
          <ScrollArrow dir="left" className="mr-1 ml-[4px]" />
          <div className="h-full w-[393px] bg-[#cdcdcd]" />
          <ScrollArrow dir="right" className="mr-1 ml-auto" />
        </div>
      </div>

      <div className={clsx('mt-[11px] flex flex-col gap-[10px] pr-[29px] pl-[10px]', ui)}>
        <div className="flex h-[24px] items-center">
          <label htmlFor="file-name" className="w-[85px]">
            檔案名稱(N):
          </label>
          <input id="file-name" defaultValue="0401.mp3" className="h-[24px] w-[301px] border border-[#777] bg-white px-[3px] pb-[2px] outline-none" />
          <button type="button" className="ml-auto h-full w-[86px] border border-[#0078d7] bg-[#e5f1fb]">
            確定
          </button>
        </div>
        <div className="flex h-[24px] items-center">
          <span className="w-[85px]">檔案類型(T):</span>
          <Select label="檔案類型" options={['全部檔案 (*.*)']} className="h-[23px] w-[301px] border-[#aaa] bg-[#e1e1e1]" textClass="pl-[3px]" />
          <button type="button" className="ml-auto h-full w-[86px] border border-[#aaa] bg-[#e1e1e1]">
            取消
          </button>
        </div>
      </div>
      <hr className="mt-[9px] mr-[25px] ml-[5px] border-t border-[#a0a0a0]" />

      <div className="flex flex-col gap-[3px] pt-[6px] pb-[28px] pl-2">
        <div className="flex h-[19px] items-center">
          <label htmlFor="url" className="w-[52px]">
            <Cells text="URL:" />
          </label>
          <input
            id="url"
            defaultValue="music/0401.mp3"
            className="h-[18px] w-[306px] border border-[#777] bg-white px-[2px] text-[10px] outline-none font-['Liberation_Mono',monospace]"
          />
          <button type="button" className={clsx(flatButton, 'ml-[56px] h-full w-[73px]')}>
            <Cells text="參數..." />
          </button>
        </div>
        <div className="flex h-[20px] items-center">
          <Cells text="相對於:" className="w-[52px]" />
          <Select label="相對於" options={['文件']} className="h-full w-[111px] border-[#aaa] bg-[#e1e1e1]" textClass={clsx('pl-[2px]', ui)} />
          <Cells text="index.html" className="ml-2" />
        </div>
        <p className="h-[20px] leading-[20px]">
          在網站定義中
          <a href="#relative" className="text-[#0000d0] underline">
            變更預設的連結「相對於」
          </a>
          。
        </p>
      </div>
      <Svg w={8} h={8} className="absolute right-[3px] bottom-[3px]">
        <path d="M6 0h2v2H6zM3 3h2v2H3zM6 3h2v2H6zM0 6h2v2H0zM3 6h2v2H3zM6 6h2v2H6z" fill="#bbb" />
      </Svg>
    </div>
  )
}

const apps: { label: string; running?: boolean; active?: boolean; art: ReactNode }[] = [
  {
    label: '檔案總管',
    running: true,
    art: (
      <>
        <path d="M1 2h9l1 2h12v18H1z" fill="#fde49a" />
        <path d="M1 2h9v3H1z" fill="#f0c040" />
        <path d="M5 23V13h14v10h-4v-5H9v5z" fill="#3fb0ea" />
      </>
    ),
  },
  {
    label: '剪取工具',
    art: (
      <>
        <ellipse cx="12" cy="9" rx="11" ry="8" fill="#eee" stroke="#aaa" transform="rotate(-30 12 9)" />
        <ellipse cx="13" cy="7" rx="6" ry="4" fill="#fff" stroke="#d95757" transform="rotate(-30 13 7)" />
        <path d="m3 14 9-3 8-7" stroke="#d93434" strokeWidth="2" />
        <path d="m11 13 9 6M18 12l-4 7" stroke="#2b6ea8" strokeWidth="2" />
        <circle cx="15" cy="20.500" r="2" stroke="#2f8fd8" strokeWidth="1.500" />
        <circle cx="21" cy="19" r="2" stroke="#2f8fd8" strokeWidth="1.500" />
      </>
    ),
  },
  {
    label: 'Word',
    art: (
      <>
        <path d="M12 3h11v18H12z" fill="#fff" stroke="#2b579a" />
        <path d="M15 7h6M15 10h6M15 13h6M15 16h6" stroke="#2b579a" strokeWidth="1.500" />
        <path d="m1 3 13-2v22L1 21z" fill="#2b579a" />
        <path d="m4 8 1.500 8L7.500 9l2 7L11 8" stroke="#fff" strokeWidth="1.600" />
      </>
    ),
  },
  {
    label: '記事本',
    art: (
      <>
        <path d="m16 4 4 0 3 14-7 4z" fill="#6b7a80" />
        <path d="M8 2h11l-4 19-13-3z" fill="#8fd0dc" stroke="#cfe9ee" />
        <path d="m2 19 13 3 7-4" stroke="#eee" strokeWidth="1.500" />
      </>
    ),
  },
  {
    label: 'Sublime Text',
    art: (
      <>
        <rect width="24" height="24" rx="2" fill="#4b4b4b" />
        <path d="M18 4v5l-7 2 7 3v4L6 21v-5l7-2-7-3V7z" fill="#ff9800" />
      </>
    ),
  },
  {
    label: 'Dreamweaver',
    active: true,
    art: (
      <>
        <path d="M2 2h20v20H2z" fill="#072401" stroke="#8ef321" strokeWidth="2" />
        <path d="M6 7v9h1.500c4.500 0 4.500-9 0-9zM12.500 9.500l1.500 6.500 1.500-6 1.500 6L18.500 9.500" stroke="#8ef321" strokeWidth="1.700" />
      </>
    ),
  },
  {
    label: 'Chrome',
    art: (
      <>
        <circle cx="12" cy="12" r="11" fill="#fcc934" />
        <path d="M12 12 2.500 6.500A11 11 0 0 1 21.500 6.500z" fill="#db4437" />
        <path d="M12 12 2.500 6.500A11 11 0 0 0 11 23l5-8z" fill="#0f9d58" />
        <circle cx="12" cy="12" r="5.500" fill="#fff" />
        <circle cx="12" cy="12" r="4.200" fill="#4285f4" />
      </>
    ),
  },
  {
    label: 'Snagit',
    art: (
      <>
        <path d="M0 0h24v24H0z" fill="#1d6795" />
        <path d="M0 6h24M0 12h24M0 18h24M6 0v24M18 0v24" stroke="#2f83b5" />
        <path d="M17 6.500C14 4 8 5 8 8.500c0 4 9 3 9 7s-6 4.500-10 2" stroke="#fff" strokeWidth="3" />
      </>
    ),
  },
  {
    label: '流程圖',
    art: (
      <>
        <path d="M12 1v22" stroke="#d00" strokeWidth="2" />
        <path d="M8.500 1.500h7v5h-7zM3.500 10.500h17v4h-17zM9 19.500h6v3H9z" fill="#ff0" stroke="#e00" strokeWidth="1.500" />
        <path d="M7 12.500h10" stroke="#700" strokeWidth="1.500" strokeDasharray="2 2" />
      </>
    ),
  },
  {
    label: 'iChart Code',
    art: (
      <>
        <path d="M0 0h24v24H0z" fill="#179c9c" />
        <text x="12" y="10" textAnchor="middle" fontSize="7" fill="#fff" fontFamily="Open Sans">
          iChart
        </text>
        <text x="12" y="20" textAnchor="middle" fontSize="9" fontWeight="700" fill="#fff" fontFamily="Open Sans">
          Code
        </text>
      </>
    ),
  },
  {
    label: '圖片檢視器',
    running: true,
    art: (
      <>
        <path d="M2 1h15l5 5v17H2z" fill="#f3f3f3" />
        <path d="M5 4h11l4 4v13H5z" fill="#f0a92b" />
        <path d="m4 13 6-9 3 8-5 8z" fill="#d94a35" />
        <circle cx="13" cy="10" r="4.500" fill="#9ce0e8" stroke="#333" strokeWidth="1.500" />
        <path d="m6 21 6-6 7 6z" fill="#7a4d9a" />
      </>
    ),
  },
]

function Taskbar() {
  return (
    <footer className={clsx('flex h-[40px] items-stretch bg-[#090909] text-xs text-white', ui)}>
      <ToolButton label="開始" className="w-[48px]">
        <Svg>
          <path d="M0 2.300 6.500 1.400v6.100H0zM7.500 1.200 16 0v7.500H7.500zM0 8.500h6.500v6.100L0 13.700zM7.500 8.500H16V16l-8.500-1.200z" fill="#fff" />
        </Svg>
      </ToolButton>
      <ToolButton label="搜尋" className="w-[48px]">
        <Svg>
          <circle cx="10.500" cy="5.500" r="4.800" stroke="#fff" strokeWidth="1.200" />
          <path d="M7 9 .8 15.200" stroke="#fff" strokeWidth="1.400" />
        </Svg>
      </ToolButton>
      <ToolButton label="工作檢視" className="w-[50px]">
        <Svg w={17} h={16}>
          <path d="M1 0v2.500h9.500V0M1 16v-2.500h9.500V16M1 5h9.500v6H1zM14.500 0v3M14.500 9v7" stroke="#fff" strokeWidth="1.200" />
          <path d="M13 5h3v3h-3z" fill="#fff" />
        </Svg>
      </ToolButton>
      {apps.map((app) => (
        <button
          key={app.label}
          type="button"
          aria-label={app.label}
          className={clsx('flex w-[49px] flex-col items-center', app.active && 'bg-[#3d3d3d]')}
        >
          <span className="flex flex-1 items-center pt-px">
            <Svg w={24} h={24}>
              {app.art}
            </Svg>
          </span>
          <span className={clsx('h-[2px]', app.active && 'w-full bg-[#76b9ed]', app.running && 'w-[40px] bg-[#76b9ed]')} />
        </button>
      ))}
      <div className="ml-auto flex items-center gap-2">
        <ToolButton label="顯示隱藏的圖示">
          <Svg w={14} h={8}>
            <path d="m1 7 6-6 6 6" stroke="#fff" strokeWidth="1.300" />
          </Svg>
        </ToolButton>
        <Svg className="ml-px">
          <path d="M0 0h16v16H0z" fill="#0e4d78" />
          <path d="M11.500 4.500C9 2.500 5 3.500 5 5.500 5 8.500 11.500 7.500 11.500 10.500 11.500 13 7 13.500 4.500 11.500" stroke="#fff" strokeWidth="2" />
        </Svg>
        <Svg w={17} h={15}>
          <path d="M5.500 2.500h11v8h-11M8 13.500h6M11 11v2.500M.5.500h4v4h-4zM2.500 5v8.500H5" stroke="#fff" />
        </Svg>
        <Svg w={17} h={14}>
          <path d="M.5 4.500H3l3-3v11l-3-3H.5z" stroke="#fff" />
          <path d="M8 5c1 1 1 3 0 4M10.500 3c2 2 2 6 0 8M13 1c3 3 3 9 0 12" stroke="#fff" strokeWidth="1.200" />
        </Svg>
        <span>中</span>
        <time className="w-[66px] text-center leading-[18px]">
          上午 08:53
          <br />
          2019/6/11
        </time>
        <ToolButton label="通知" className="ml-2">
          <Svg w={17} h={16}>
            <path d="M0 0h16v12h-7l-4 4v-4H0z" fill="#fff" />
            <path d="M3 3.500h10M3 6h10M3 8.500h6" stroke="#111" />
            <path d="M13 8a3.500 3.500 0 1 0 3.500 5A3.500 3.500 0 0 1 13 8z" fill="#fff" stroke="#111" strokeWidth=".8" />
          </Svg>
        </ToolButton>
        <div className="mr-[3px] ml-3 w-px self-stretch bg-[#555]" />
      </div>
    </footer>
  )
}

export default function App() {
  return (
    <div className="relative flex min-h-screen flex-col overflow-hidden bg-[#d6d6d6] font-['Noto_Sans_CJK_TC',sans-serif]">
      <MenuBar />
      <DocumentTabs />
      <ViewToolbar />
      <StandardToolbar />
      <Canvas />
      <StatusBar />
      <PropertiesPanel />
      <Taskbar />
      <FilesPanel />
      <FileDialog />
    </div>
  )
}
